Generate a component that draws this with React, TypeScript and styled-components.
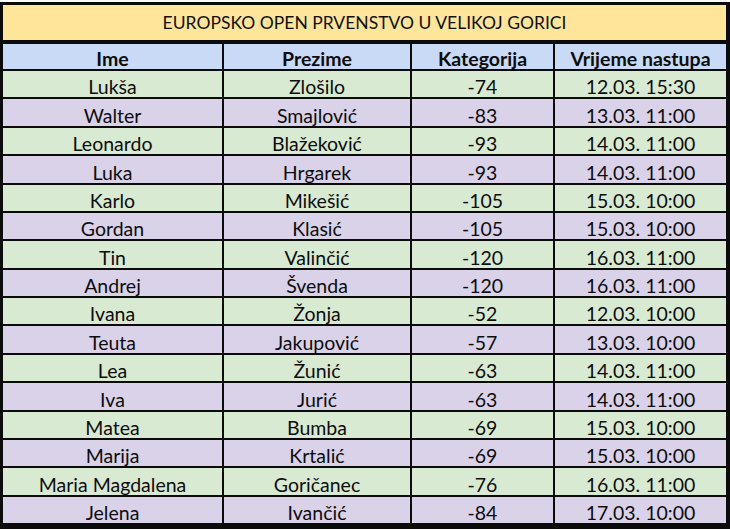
import React from "react";
import styled, { createGlobalStyle } from "styled-components";

const Global = createGlobalStyle`
  html, body { margin: 0; padding: 0; background: #ffffff; }
  body { font-family: Lato, "Open Sans", "Liberation Sans", sans-serif; }
`;

const Frame = styled.div`
  box-sizing: border-box;
  width: 730px;
  height: 527px;
  margin-top: 2px;
  border-style: solid;
  border-color: #0b0b0b;
  border-width: 3px 4px 6px 3px;
  display: flex;
  flex-direction: column;
  background: #0b0b0b;
`;

const Title = styled.div`
  height: 39px;
  flex: none;
  background: #fee59a;
  border-bottom: 4px solid #0b0b0b;
  display: flex;
  align-items: center;
  justify-content: center;
  padding-bottom: 1px;
  box-sizing: border-box;
  font-size: 17.5px;
  color: #111;
`;

const Grid = styled.div`
  flex: 1;
  display: grid;
  grid-template-columns: 219px 186px 141px 1fr;
  grid-template-rows: 25px repeat(16, 1fr);
  column-gap: 2px;
  row-gap: 2px;
  background: #0b0b0b;
`;

type Tone = "head" | "green" | "purple";
const bg: Record<Tone, string> = {
  head: "#c9daf7",
  green: "#d9ead3",
  purple: "#d9d2e9",
};

const Cell = styled.div<{ $tone: Tone }>`
  background: ${(p) => bg[p.$tone]};
  display: flex;
  align-items: center;
  justify-content: center;
  font-size: 19.5px;
  font-weight: ${(p) => (p.$tone === "head" ? 700 : 400)};
  color: #0d0d0d;
  white-space: nowrap;
  line-height: 1;
  padding-top: ${(p) => (p.$tone === "head" ? "4px" : "6px")};
  box-sizing: border-box;
  min-height: 0;
`;

const rows: [string, string, string, string][] = [
  ["Lukša", "Zlošilo", "-74", "12.03. 15:30"],
  ["Walter", "Smajlović", "-83", "13.03. 11:00"],
  ["Leonardo", "Blažeković", "-93", "14.03. 11:00"],
  ["Luka", "Hrgarek", "-93", "14.03. 11:00"],
  ["Karlo", "Mikešić", "-105", "15.03. 10:00"],
  ["Gordan", "Klasić", "-105", "15.03. 10:00"],
  ["Tin", "Valinčić", "-120", "16.03. 11:00"],
  ["Andrej", "Švenda", "-120", "16.03. 11:00"],
  ["Ivana", "Žonja", "-52", "12.03. 10:00"],
  ["Teuta", "Jakupović", "-57", "13.03. 10:00"],
  ["Lea", "Žunić", "-63", "14.03. 11:00"],
  ["Iva", "Jurić", "-63", "14.03. 11:00"],
  ["Matea", "Bumba", "-69", "15.03. 10:00"],
  ["Marija", "Krtalić", "-69", "15.03. 10:00"],
  ["Maria Magdalena", "Goričanec", "-76", "16.03. 11:00"],
  ["Jelena", "Ivančić", "-84", "17.03. 10:00"],
];

const headers = ["Ime", "Prezime", "Kategorija", "Vrijeme nastupa"];

export default function App() {
  return (
    <>
      <Global />
      <Frame>
        <Title>EUROPSKO OPEN PRVENSTVO U VELIKOJ GORICI</Title>
        <Grid>
          {headers.map((h) => (
            <Cell key={h} $tone="head">
              {h}
            </Cell>
          ))}
          {rows.map((r, i) =>
            r.map((c, j) => (
              <Cell key={`${i}-${j}`} $tone={i % 2 === 0 ? "green" : "purple"}>
                {c}
              </Cell>
            ))
          )}
        </Grid>
      </Frame>
    </>
  );
}
